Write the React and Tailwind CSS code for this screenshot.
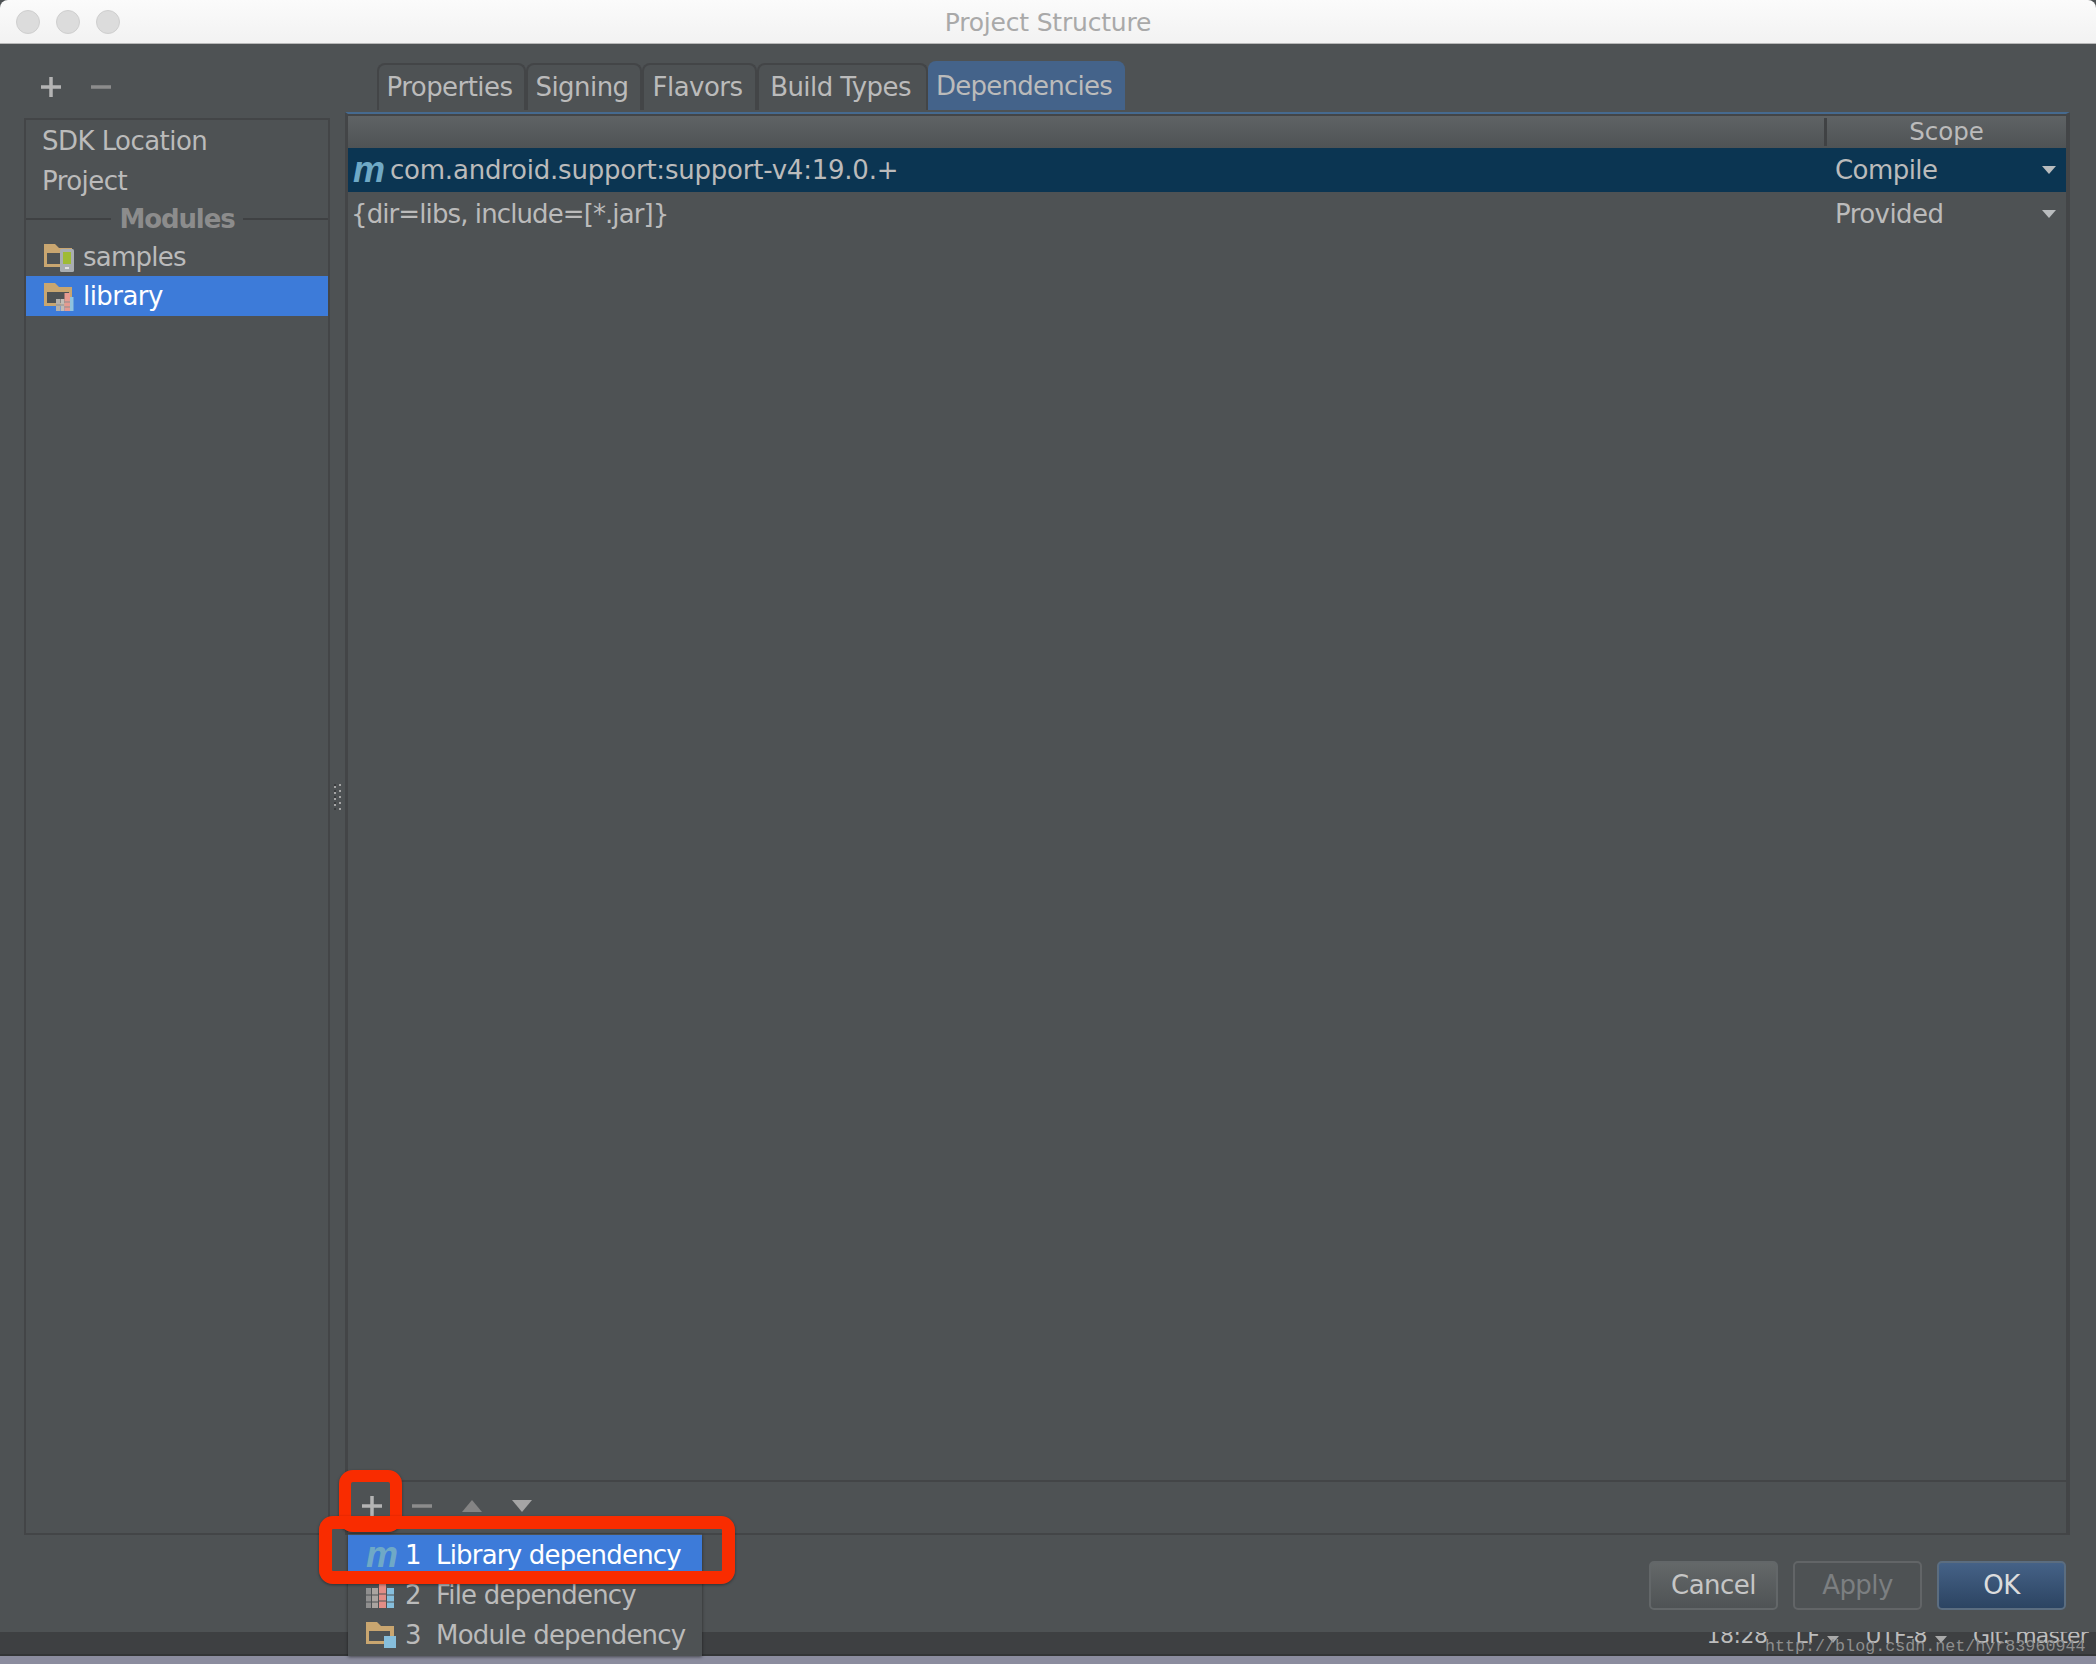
const FolderIcon = ({ children }) => (
    <svg width="32" height="30" viewBox="0 0 32 30" className="shrink-0">
        <path d="M0 2h11l4 4h13v19H0z" fill="#c9a670" />
        <rect x="3" y="11" width="22" height="11" fill="#4e5254" />
        {children}
    </svg>
);

const PhoneFolder = () => (
    <FolderIcon>
        <rect x="16" y="7" width="14" height="23" rx="1.5" fill="#a9adb0" />
        <rect x="19" y="10" width="8" height="12" fill="#9fbb34" />
        <rect x="21" y="25" width="4" height="2" fill="#e0e0e0" />
    </FolderIcon>
);

const LibFolder = () => (
    <FolderIcon>
        <rect x="12" y="18" width="4" height="12" fill="#b5b0aa" />
        <rect x="16.5" y="18" width="4" height="12" fill="#c2bdb6" />
        <rect x="20.5" y="12" width="5.5" height="18" fill="#e69a90" />
        <rect x="26" y="16" width="3.5" height="14" fill="#8fc3de" />
        <path d="M12 24h8M20.5 21h5.500M20.500 26h5.500" stroke="#8d8d8d" strokeWidth="1" />
    </FolderIcon>
);

const BarsIcon = () => (
    <svg width="28" height="26" viewBox="0 0 28 26" className="shrink-0">
        <rect x="0" y="6" width="5" height="20" fill="#8f8f8f" />
        <rect x="6" y="6" width="6" height="20" fill="#a9a4a0" />
        <rect x="13" y="0" width="7" height="26" fill="#e28d86" />
        <rect x="21" y="6" width="7" height="20" fill="#86bedc" />
        <path d="M0 13h12M0 20h12M13 12h7M13 19h7M21 13h7M21 20h7" stroke="#4e5254" strokeWidth="1" />
    </svg>
);

const ModuleIcon = () => (
    <svg width="30" height="26" viewBox="0 0 30 26" className="shrink-0">
        <path d="M0 0h11l4 4h13v18H0z" fill="#c9a670" />
        <rect x="3" y="9" width="21" height="10" fill="#4e5254" />
        <rect x="18" y="14" width="12" height="12" fill="#86bedc" />
    </svg>
);

const Plus = ({ color = "#b4b4b4" }) => (
    <svg width="20" height="20" viewBox="0 0 20 20">
        <path d="M10 0v20M0 10h20" stroke={color} strokeWidth="3.5" />
    </svg>
);

const Minus = ({ color = "#8c8c8c" }) => (
    <svg width="20" height="20" viewBox="0 0 20 20">
        <path d="M0 10h20" stroke={color} strokeWidth="3.5" />
    </svg>
);

const Caret = () => (
    <svg width="14" height="8" viewBox="0 0 14 8" className="shrink-0">
        <path d="M0 0h14L7 8z" fill="#b9bcbe" />
    </svg>
);

// status bar popup arrows, the upper one is cut off by the dialog
const UpDown = () => (
    <svg width="12" height="20" viewBox="0 0 12 20" className="shrink-0">
        <path d="M6 0l6 7H0zM0 11h12l-6 7z" fill="#a9a9a9" />
    </svg>
);

// splitter grip, two staggered columns of dots
const Grip = () => (
    <svg width="7" height="26" viewBox="0 0 7 26">
        {[0, 6, 12, 18, 24].map((y) => (
            <g key={y}>
                <rect x="0" y={y + 2} width="2" height="2" fill="#a5a5a5" />
                <rect x="5" y={y} width="2" height="2" fill="#a5a5a5" />
                <rect x="0" y={y} width="2" height="2" fill="#3a3c3e" />
            </g>
        ))}
    </svg>
);

const MGlyph = ({ className }) => (
    <span className={`font-['Liberation_Sans',sans-serif] font-bold italic text-[36px] leading-none tracking-normal ${className}`}>m</span>
);

const tabs = [
    { name: "Properties", width: "w-[149px]" },
    { name: "Signing", width: "w-[116px]" },
    { name: "Flavors", width: "w-[115px]" },
    { name: "Build Types", width: "w-[171px]" },
];

const App = () => {
    return (
        <div className="relative w-[2096px] h-[1664px] overflow-hidden flex flex-col bg-[#4e5254] font-['DejaVu_Sans',sans-serif] text-[26px] tracking-[-0.55px] text-[#bbbbbb]">

            {/* Title bar */}
            <div className="relative h-[44px] shrink-0 flex items-center justify-center pt-[2px] bg-gradient-to-b from-[#fbfbfb] to-[#f2f2f2] border-b border-[#b8b8b8] rounded-t-[8px]">
                <div className="absolute left-[16px] top-[10px] flex gap-[16px]">
                    <div className="w-[24px] h-[24px] rounded-full bg-[#dcdcdc] border border-[#cfcfcf]" />
                    <div className="w-[24px] h-[24px] rounded-full bg-[#dcdcdc] border border-[#cfcfcf]" />
                    <div className="w-[24px] h-[24px] rounded-full bg-[#dcdcdc] border border-[#cfcfcf]" />
                </div>
                <span className="text-[#a9a9a9] text-[25px] tracking-[-0.2px]">Project Structure</span>
            </div>

            {/* Dialog body */}
            <div className="h-[1588px] shrink-0 flex flex-col">
                <div className="h-[1491px] shrink-0 flex pl-[24px]">

                    {/* Sidebar */}
                    <div className="w-[306px] shrink-0 flex flex-col">
                        <div className="h-[74px] shrink-0 flex items-center gap-[30px] pl-[17px] pt-[12px]">
                            <Plus />
                            <Minus />
                        </div>
                        <div className="flex-1 border-2 border-[#434547]">
                            <div className="h-[40px] flex items-center pl-[16px] pt-[2px]">SDK Location</div>
                            <div className="h-[40px] flex items-center pl-[16px] pt-[2px]">Project</div>
                            <div className="h-[37px] flex items-center gap-[8px] text-[#8c8c8c] font-bold tracking-[-1.1px]">
                                <div className="flex-1 h-[2px] bg-[#3f4143]" />
                                <span className="pt-[2px]">Modules</span>
                                <div className="flex-1 h-[2px] bg-[#3f4143]" />
                            </div>
                            <div className="h-[39px] flex items-center gap-[7px] pl-[18px] tracking-[-0.76px]">
                                <PhoneFolder />
                                <span className="pt-[2px]">samples</span>
                            </div>
                            <div className="h-[40px] flex items-center gap-[7px] pl-[18px] bg-[#3d7bd9] text-white">
                                <LibFolder />
                                <span className="pt-[1px]">library</span>
                            </div>
                        </div>
                    </div>

                    {/* Splitter */}
                    <div className="w-[15px] shrink-0 flex items-center justify-center pt-[14px]">
                        <Grip />
                    </div>

                    {/* Right panel */}
                    <div className="w-[1725px] shrink-0 flex flex-col">
                        <div className="h-[68px] shrink-0 flex items-end pl-[32px] pb-[2px]">
                            {tabs.map((tab) => (
                                <div key={tab.name} className={`${tab.width} h-[47px] shrink-0 flex items-center justify-center pr-[4px] border-t-2 border-x-2 border-[#434547] rounded-t-[8px]`}>
                                    {tab.name}
                                </div>
                            ))}
                            <div className="w-[197px] h-[49px] shrink-0 flex items-center justify-center pr-[5px] pt-[1px] bg-[#44638a] rounded-t-[8px] tracking-[-0.75px]">
                                Dependencies
                            </div>
                        </div>
                        <div className="flex-1 flex flex-col border-t-2 border-t-[#466a8f] border-l-[3px] border-r-[4px] border-b-2 border-x-[#434547] border-b-[#434547]">
                            <div className="h-[34px] shrink-0 flex border-t-2 border-[#434547] bg-gradient-to-b from-[#5f6365] to-[#4f5355]">
                                <div className="w-[1479px] shrink-0 border-r-[3px] border-[#404244] my-[2px]" />
                                <div className="flex-1 flex items-center justify-center text-[24.5px] tracking-normal">Scope</div>
                            </div>
                            <div className="h-[44px] shrink-0 flex items-center bg-[#0b3552]">
                                <MGlyph className="ml-[5px] w-[32px] text-[#6fa9c6]" />
                                <span className="ml-[5px] flex-1 tracking-[-0.22px]">com.android.support:support-v4:19.0.+</span>
                                <span className="w-[207px]">Compile</span>
                                <Caret />
                                <div className="w-[10px]" />
                            </div>
                            <div className="h-[44px] shrink-0 flex items-center">
                                <span className="ml-[3px] flex-1 tracking-[-0.9px]">{"{dir=libs, include=[*.jar]}"}</span>
                                <span className="w-[207px]">Provided</span>
                                <Caret />
                                <div className="w-[10px]" />
                            </div>
                            <div className="flex-1" />
                            <div className="h-[53px] shrink-0 flex items-center border-t-2 border-[#434547] pl-[14px] pb-[4px] gap-[30px]">
                                <Plus />
                                <Minus />
                                <svg width="20" height="12" viewBox="0 0 20 12"><path d="M10 0l10 12H0z" fill="#848484" /></svg>
                                <svg width="20" height="12" viewBox="0 0 20 12"><path d="M0 0h20L10 12z" fill="#a5a5a5" /></svg>
                            </div>
                        </div>
                    </div>
                </div>

                {/* Buttons */}
                <div className="flex-1 flex justify-end gap-[15px] pt-[26px] pr-[30px]">
                    <div className="w-[129px] h-[49px] flex items-center justify-center rounded-[5px] border-2 border-[#636769] bg-gradient-to-b from-[#646869] to-[#4f5355] text-[#c6c6c6]">Cancel</div>
                    <div className="w-[129px] h-[49px] flex items-center justify-center rounded-[5px] border-2 border-[#626567] text-[#7c7f81]">Apply</div>
                    <div className="w-[129px] h-[49px] flex items-center justify-center rounded-[5px] border-2 border-[#5b6d80] bg-gradient-to-b from-[#456287] to-[#2c4462] text-[#dcdcdc]">OK</div>
                </div>
            </div>

            {/* Status bar, mostly hidden under the dialog */}
            <div className="h-[24px] shrink-0 overflow-hidden flex justify-end items-start bg-[#3e4042] border-b-2 border-[#333536] pr-[8px] text-[#bdbdbd] text-[22px] leading-none tracking-[-0.5px]">
                <div className="flex items-start -mt-[7px] whitespace-nowrap">
                    <span className="mr-[28px]">18:28</span>
                    <span className="mr-[8px]">LF</span>
                    <UpDown />
                    <span className="ml-[26px] mr-[8px]">UTF-8</span>
                    <UpDown />
                    <span className="ml-[26px] tracking-[-0.8px]">Git: master</span>
                </div>
            </div>
            <div className="flex-1 bg-[#8b8c9e]" />

            {/* Add-dependency popup */}
            <div className="absolute left-[348px] top-[1534px] w-[354px] h-[122px] pt-[1px] bg-[#4e5254] shadow-[0_1px_3px_rgba(0,0,0,0.5)] tracking-[-0.8px]">
                <div className="h-[40px] flex items-center pl-[18px] bg-[#3d7bd9] text-white">
                    <MGlyph className="w-[39px] text-[#6fa9c6]" />
                    <span className="w-[31px]">1</span>
                    <span>Library dependency</span>
                </div>
                <div className="h-[40px] flex items-center pl-[18px]">
                    <div className="w-[39px]"><BarsIcon /></div>
                    <span className="w-[31px]">2</span>
                    <span>File dependency</span>
                </div>
                <div className="h-[40px] flex items-center pl-[18px]">
                    <div className="w-[39px]"><ModuleIcon /></div>
                    <span className="w-[31px]">3</span>
                    <span>Module dependency</span>
                </div>
            </div>

            {/* Red annotations on top of the screenshot */}
            <div className="absolute left-[339px] top-[1470px] w-[63px] h-[62px] border-[12px] border-[#f92c00] rounded-[14px] shadow-[0_1px_3px_rgba(0,0,0,0.4)]" />
            <div className="absolute left-[319px] top-[1516px] w-[416px] h-[68px] border-[13px] border-[#f92c00] rounded-[14px] shadow-[0_1px_3px_rgba(0,0,0,0.4)]" />

            {/* Watermark */}
            <div className="absolute left-[1765px] top-[1634px] font-['Liberation_Mono',monospace] text-[16.7px] tracking-normal text-[#8f8f8f] whitespace-nowrap">
                http://blog.csdn.net/hyr83960944
            </div>
        </div>
    );
};

export default App;
